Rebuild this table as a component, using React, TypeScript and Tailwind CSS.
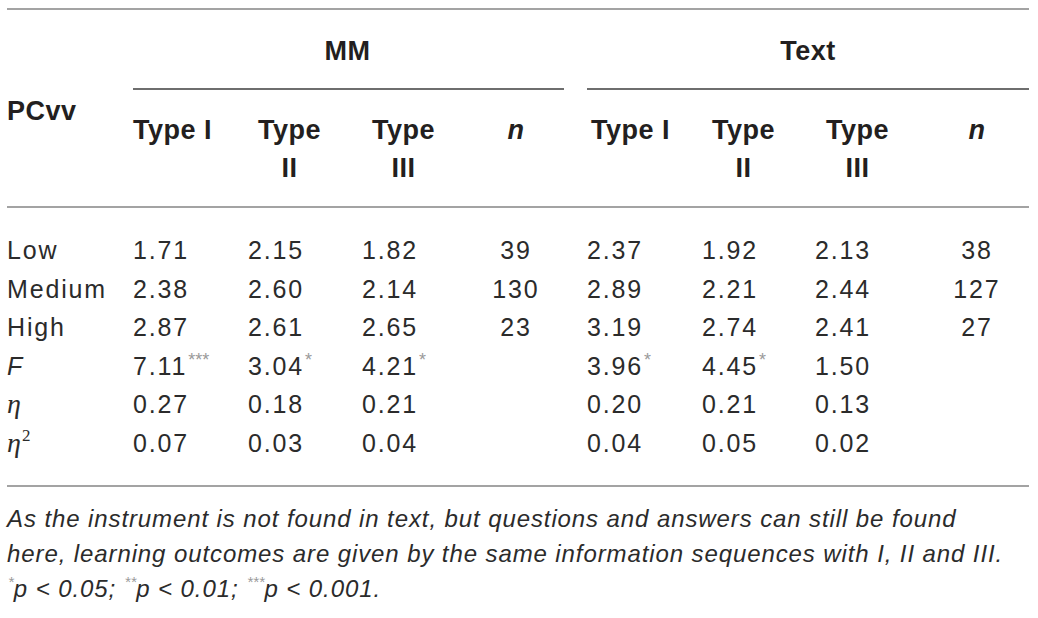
import React from "react";

const gridCols =
  "grid grid-cols-[126px_115px_114px_108px_92px_25px_115px_113px_110px_104px]";

function Star({ s, big }: { s: string; big?: boolean }) {
  return (
    <sup
      className={`relative ml-[1px] align-super leading-none tracking-[0px] text-[#9a9a9a] ${
        big ? "top-[1px] text-[18px]" : "top-[-1px] text-[15px]"
      }`}
    >
      {s}
    </sup>
  );
}

type Cell = { v: string; star?: string };
type Row = { label: React.ReactNode; mm: Cell[]; mmN: string; tx: Cell[]; txN: string };

const rows: Row[] = [
  { label: "Low", mm: [{ v: "1.71" }, { v: "2.15" }, { v: "1.82" }], mmN: "39", tx: [{ v: "2.37" }, { v: "1.92" }, { v: "2.13" }], txN: "38" },
  { label: "Medium", mm: [{ v: "2.38" }, { v: "2.60" }, { v: "2.14" }], mmN: "130", tx: [{ v: "2.89" }, { v: "2.21" }, { v: "2.44" }], txN: "127" },
  { label: "High", mm: [{ v: "2.87" }, { v: "2.61" }, { v: "2.65" }], mmN: "23", tx: [{ v: "3.19" }, { v: "2.74" }, { v: "2.41" }], txN: "27" },
  {
    label: <span className="italic">F</span>,
    mm: [{ v: "7.11", star: "***" }, { v: "3.04", star: "*" }, { v: "4.21", star: "*" }],
    mmN: "",
    tx: [{ v: "3.96", star: "*" }, { v: "4.45", star: "*" }, { v: "1.50" }],
    txN: "",
  },
  {
    label: <span className="font-['Liberation_Serif',serif] text-[28px] italic tracking-normal">η</span>,
    mm: [{ v: "0.27" }, { v: "0.18" }, { v: "0.21" }],
    mmN: "",
    tx: [{ v: "0.20" }, { v: "0.21" }, { v: "0.13" }],
    txN: "",
  },
  {
    label: (
      <span className="font-['Liberation_Serif',serif] text-[28px] italic tracking-normal">
        η<sup className="relative top-[-1px] ml-[1px] align-super text-[17px] not-italic">2</sup>
      </span>
    ),
    mm: [{ v: "0.07" }, { v: "0.03" }, { v: "0.04" }],
    mmN: "",
    tx: [{ v: "0.04" }, { v: "0.05" }, { v: "0.02" }],
    txN: "",
  },
];

function TypeHead({ top, bottom, pl }: { top: string; bottom?: string; pl: string }) {
  return (
    <div className={`flex ${pl}`}>
      <div className="inline-flex flex-col items-center">
        <span>{top}</span>
        {bottom && <span>{bottom}</span>}
      </div>
    </div>
  );
}

export default function App() {
  return (
    <div className="h-[618px] w-[1038px] overflow-hidden bg-white pl-[7px] pt-[8px] font-['Liberation_Sans',Arial,sans-serif] text-[#231f20]">
      <div className="w-[1022px]">
        <div className="h-[2px] bg-[#a3a3a3]" />
        {/* Header */}
        <div className={`${gridCols} text-[27px] font-bold tracking-[0.5px] leading-[38px]`}>
          <div className="row-span-2 flex items-center pt-[5px]">PCvv</div>
          <div className="col-span-4 flex h-[78px] flex-col">
            <div className="flex flex-1 items-center justify-center pt-[3px]">MM</div>
          </div>
          <div />
          <div className="col-span-4 flex h-[78px] flex-col">
            <div className="flex flex-1 items-center justify-center pt-[3px]">Text</div>
          </div>
          <div className="col-span-4 col-start-2 row-start-2 flex flex-col">
            <div className="mr-[-2px] h-[2px] bg-[#6e6e6e]" />
            <div className="grid grid-cols-[115px_114px_108px_92px] pb-[19px] pt-[21px]">
              <TypeHead top="Type I" pl="pl-0" />
              <TypeHead top="Type" bottom="II" pl="pl-[10px]" />
              <TypeHead top="Type" bottom="III" pl="pl-[10px]" />
              <div className="flex justify-center italic">n</div>
            </div>
          </div>
          <div className="col-span-4 col-start-7 row-start-2 flex flex-col">
            <div className="h-[2px] bg-[#6e6e6e]" />
            <div className="grid grid-cols-[115px_113px_110px_104px] pb-[19px] pt-[21px]">
              <TypeHead top="Type I" pl="pl-[4px]" />
              <TypeHead top="Type" bottom="II" pl="pl-[10px]" />
              <TypeHead top="Type" bottom="III" pl="pl-[11px]" />
              <div className="flex justify-center italic">n</div>
            </div>
          </div>
        </div>
        <div className="h-[2px] bg-[#a3a3a3]" />
        {/* Body */}
        <div className="pb-[22px] pt-[23px] text-[25px] leading-[38.6px] tracking-[1.85px] text-[#2b2b2b]">
          {rows.map((r, i) => (
            <div key={i} className={`${gridCols} h-[38.6px]`}>
              <div>{r.label}</div>
              {r.mm.map((c, j) => (
                <div key={j}>
                  {c.v}
                  {c.star && <Star s={c.star} big />}
                </div>
              ))}
              <div className="text-center">{r.mmN}</div>
              <div />
              {r.tx.map((c, j) => (
                <div key={j}>
                  {c.v}
                  {c.star && <Star s={c.star} big />}
                </div>
              ))}
              <div className="text-center">{r.txN}</div>
            </div>
          ))}
        </div>
        <div className="h-[2px] bg-[#a3a3a3]" />
        {/* Footer */}
        <div className="pt-[14px] text-[24px] italic leading-[35px] tracking-[0.9px] text-[#2b2b2b]">
          <p>As the instrument is not found in text, but questions and answers can still be found</p>
          <p>here, learning outcomes are given by the same information sequences with I, II and III.</p>
          <p>
            <Star s="*" />p &lt; 0.05; <Star s="**" />p &lt; 0.01; <Star s="***" />p &lt; 0.001.
          </p>
        </div>
      </div>
    </div>
  );
}
